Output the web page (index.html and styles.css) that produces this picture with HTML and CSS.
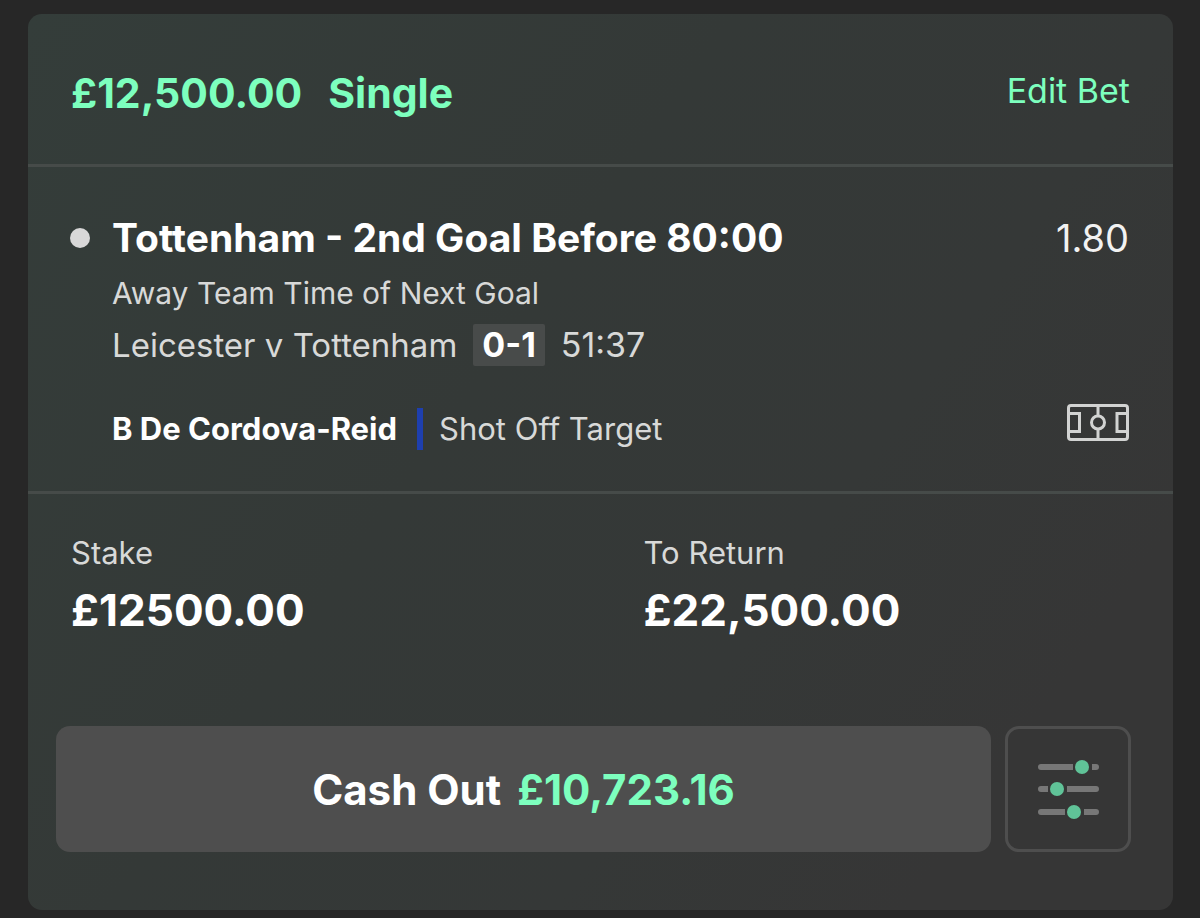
FILE: index.html
```html
<!doctype html>
<html lang="en">
<head>
	<meta charset="utf-8">
	<title>My Bets</title>
	<link rel="stylesheet" href="styles.css">
</head>
<body>
	<main class="bet">
		<header class="bet-header">
			<h1 class="bet-title"><span>£12,500.00</span><span>Single</span></h1>
			<a class="edit" href="#">Edit Bet</a>
		</header>
		<section class="selection">
			<span class="dot"></span>
			<div class="details">
				<div class="row">
					<h2 class="pick">Tottenham - 2nd Goal Before 80:00</h2>
					<span class="odds">1.80</span>
				</div>
				<p class="market">Away Team Time of Next Goal</p>
				<p class="fixture"><span>Leicester v Tottenham</span><b class="score">0-1</b><span class="clock">51:37</span></p>
				<div class="row event-row">
					<p class="event"><b class="player">B De Cordova-Reid</b><span>Shot Off Target</span></p>
					<svg class="pitch" viewBox="0 0 62 37" width="62" height="37" fill="none" stroke="#d2d3d2" stroke-width="3">
						<rect x="1.5" y="1.5" width="59" height="34" rx="2.5"/>
						<path d="M31 1v11M31 25v11M2 9.5h10.5v18H2M60 9.5H50v18h10"/>
						<circle cx="31" cy="18.5" r="6.5"/>
					</svg>
				</div>
			</div>
		</section>
		<section class="totals">
			<div class="total">
				<p class="label">Stake</p>
				<p class="amount">£12500.00</p>
			</div>
			<div class="total">
				<p class="label">To Return</p>
				<p class="amount">£22,500.00</p>
			</div>
		</section>
		<div class="actions">
			<button class="cashout" type="button"><span>Cash Out</span><span class="value">£10,723.16</span></button>
			<button class="options" type="button" aria-label="Cash out options">
				<svg viewBox="0 0 62 60" width="62" height="60">
					<path d="M4 8h55M4 30h55M4 53h55" stroke="#777" stroke-width="6" stroke-linecap="round"/>
					<path d="M36 8h19M11 30h19M28 53h19" stroke="#363636" stroke-width="7"/>
					<g fill="#60c398"><circle cx="45" cy="8" r="7"/><circle cx="20" cy="30" r="7"/><circle cx="37" cy="53" r="7"/></g>
				</svg>
			</button>
		</div>
	</main>
</body>
</html>
```
FILE: styles.css
```css
*{box-sizing: border-box;}
body{
	margin: 0;
	padding: 14px 27px 8px 28px;
	background: #272727;
	color: #d8d9d8;
	font-family: Inter, "Liberation Sans", sans-serif;
	font-size: 31px;
	line-height: 42px;
}
h1, h2, p{margin: 0;}
.bet{
	border-radius: 14px;
	background: linear-gradient(125deg, #343d3a 0%, #343937 40%, #353837 65%, #363636 85%);
}
.bet-header{
	display: flex;
	justify-content: space-between;
	align-items: flex-start;
	padding: 53px 43px 45px;
	border-bottom: 3px solid #464b49;
}
.bet-title{
	display: flex;
	gap: 26px;
	color: #7dffbe;
	font-size: 41px;
	line-height: 52px;
}
.edit{
	color: #7dffbe;
	font-size: 34px;
	line-height: 48px;
	text-decoration: none;
}
.selection{
	display: flex;
	gap: 22px;
	padding: 43px 44px 41px 42px;
	border-bottom: 3px solid #464b49;
}
.dot{
	flex: none;
	width: 20px;
	height: 20px;
	margin-top: 18px;
	border-radius: 50%;
	background: #d8d8d8;
}
.details{flex: 1;}
.row{
	display: flex;
	justify-content: space-between;
}
.pick{
	color: #fff;
	font-size: 39px;
	line-height: 56px;
}
.odds{
	color: #f2f2f2;
	font-size: 38px;
	line-height: 56px;
}
.market{
	margin-top: 6px;
	font-size: 30px;
}
.fixture{
	display: flex;
	gap: 16px;
	margin-top: 10px;
	font-size: 33px;
}
.score{
	padding: 0 9px;
	border-radius: 2px;
	background: #484b4a;
	color: #fff;
	font-size: 34px;
}
.clock{font-size: 34px;}
.event-row{margin-top: 38px;}
.event{
	display: flex;
	margin-top: 4px;
}
.player{
	margin-right: 16px;
	padding-right: 20px;
	border-right: 6px solid #1e3fae;
	color: #fff;
}
.totals{
	display: flex;
	padding-top: 38px;
}
.total{
	flex: 1;
	padding: 0 43px;
}
.amount{
	margin-top: 8px;
	color: #fff;
	font-size: 44px;
	font-weight: 700;
	line-height: 56px;
}
.actions{
	display: flex;
	gap: 14px;
	padding: 88px 42px 58px 28px;
}
.cashout{
	display: flex;
	flex: 1;
	justify-content: center;
	align-items: center;
	gap: 16px;
	height: 126px;
	border: 0;
	border-radius: 14px;
	background: #4e4e4e;
	color: #fff;
	font: 700 42px Inter, "Liberation Sans", sans-serif;
}
.value{color: #7dffbe;}
.options{
	display: flex;
	justify-content: center;
	align-items: center;
	width: 126px;
	padding: 0;
	border: 3px solid #4e4e4e;
	border-radius: 14px;
	background: #363636;
}
```
